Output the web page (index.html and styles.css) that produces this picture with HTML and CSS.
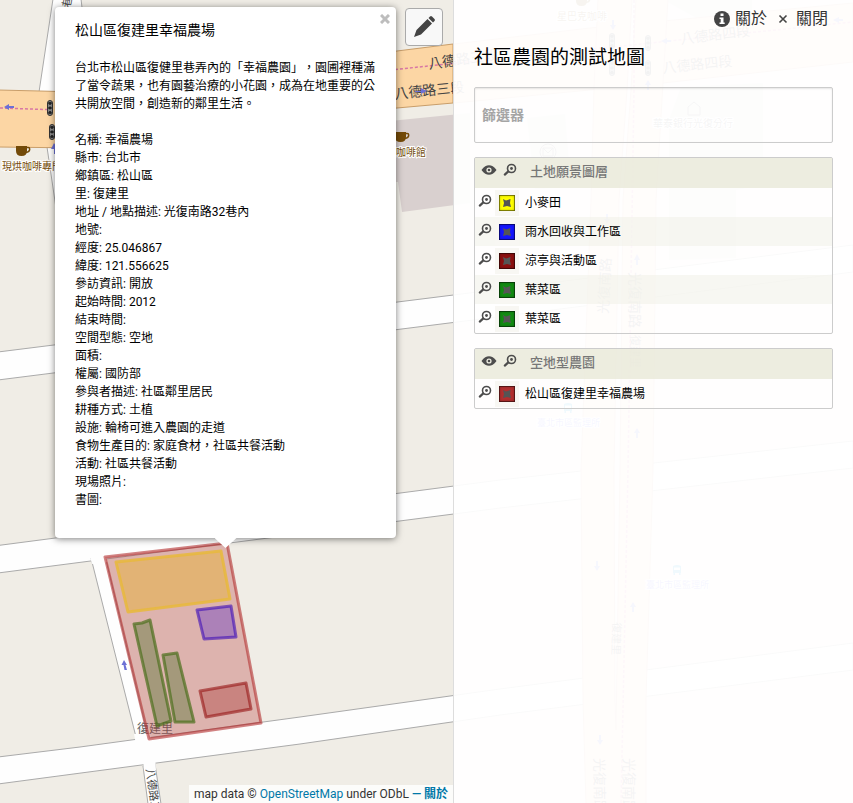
FILE: index.html
```html
<!DOCTYPE html>
<html lang="zh-Hant-TW">
<head>
<meta charset="utf-8">
<meta name="viewport" content="width=device-width, initial-scale=1">
<title>社區農園的測試地圖</title>
<link rel="stylesheet" href="styles.css">
</head>
<body>
<svg class="defs" aria-hidden="true">
  <symbol id="lens" viewBox="0 0 14 14"><circle cx="8.5" cy="5.5" r="4" fill="none" stroke="#4d4d4d" stroke-width="1.6"/><circle cx="8.5" cy="5.5" r="1.4" fill="#4d4d4d"/><path d="M5.3 8.4 1.8 11.6" stroke="#4d4d4d" stroke-width="2.2" stroke-linecap="round"/></symbol>
  <symbol id="eye" viewBox="0 0 16 12"><path d="M.5 6C3 2.4 5.500 1.200 8 1.200S13 2.400 15.500 6C13 9.600 10.500 10.800 8 10.800S3 9.600.500 6Z" fill="#4d4d4d"/><circle cx="8" cy="6" r="2.600" fill="#eeeee2"/><circle cx="8" cy="6" r="1.300" fill="#4d4d4d"/></symbol>
  <symbol id="poly" viewBox="0 0 16 16"><path d="M4 4 7 5.500 11.500 4 11 8 12 12 8 11 4 12 5 8Z" fill="#555"/></symbol>
  <symbol id="arrow" viewBox="-6 -4 12 8" overflow="visible"><path d="M-5 0 0-3V-1H5V1H0V3Z" fill="#6c70d5"/></symbol>
  <symbol id="signal" viewBox="0 0 8 16"><rect x="1.500" y=".500" width="5" height="15" rx="2.500" fill="#888" stroke="#333"/><path d="M2 3h4M2 8h4M2 13h4" stroke="#222"/><circle cx="4" cy="3.500" r="1.400" fill="#222"/><circle cx="4" cy="8" r="1.400" fill="#222"/><circle cx="4" cy="12.500" r="1.400" fill="#222"/></symbol>
  <symbol id="cup" viewBox="0 0 15 12"><path d="M0 1H11V6Q11 11 5.500 11T0 6Z" fill="#734a08"/><path d="M10 2.500h2.200a1.500 1.500 0 0 1 1.500 1.500q0 3-4 3.500" fill="none" stroke="#734a08" stroke-width="1.500"/></symbol>
  <symbol id="bus" viewBox="0 0 10 10"><path d="M1 1Q5-1 9 1V8H8.500V10H7V8H3V10H1.500V8H1Z" fill="#0092da"/><path d="M2 2.500H8V5H2Z" fill="#fff"/></symbol>
</svg>

<div class="app">
  <svg class="tiles" viewBox="0 0 853 803" preserveAspectRatio="xMinYMin slice" aria-hidden="true">
    <rect width="853" height="803" fill="#f0ede6"/>
    <g fill="#d9d0cf">
      <path d="M380 122 470 113V203L402 212 398 182H380Z"/>
      <path d="M527 118 565 114 571 187 535 189Z"/>
      <path d="M681 87 763 83V185L736 190V258L669 260V120Z"/>
      <path d="M664 0H752V10L700 20Z"/>
    </g>
    <g fill="#fefefe" stroke="#aaa" stroke-width="1">
      <path d="M53-1 39 92H92L81-1Z"/>
      <path d="M47 147 57 215H78L70 147Z"/>
      <path d="M-2 352 853 245V272L-2 380Z"/>
      <path d="M-2 545.500 500 480 853 441V468L500 508-2 573Z"/>
      <path d="M-2 757 80 747 300 717 500 689 853 643V670L500 715 300 744-2 784Z"/>
      <path d="M143 766 148 804H161L155 764Z"/>
      <path d="M91 558 137 741H149L105 556Z"/>
    </g>
    <path fill="#fefefe" d="M88 549 103 547 108 562 92 564ZM134 734H150L152 748 137 750ZM143 758 155 757 156 770 144 771Z"/>
    <g fill="#fcd6a4" stroke="#c99e6a" stroke-width="1">
      <path d="M-2 90 80 92 300 68 397 51 453 44V103L397 108 80 148-2 147Z"/>
    </g>
    <g fill="#fcd0bc" stroke="#d8aa94" stroke-width="1">
      <path d="M454 44 590 28 853 3V62L663 83 454 103Z"/>
      <path d="M598-1 594 88 591 200 581 470 583 700 586 804H646L646 700 653 470 656 200 663 83 668-1Z"/>
    </g>
    <path d="M632-1 627 90 619 200 614 470 615 700 616 730 620 470 623 200 631 90 636-1Z" fill="#f0ede6" stroke="#d8aa94"/>
    <g fill="none" stroke="#d877a4" stroke-width="1.500" stroke-dasharray="3 2">
      <path d="M0 108 60 110M390 70 853 22M634 0V90L628 470 621 803"/>
    </g>
    <g class="road-label">
      <text transform="translate(429 69) rotate(-8)">八德路三段</text>
      <text transform="translate(395 99) rotate(-6)">八德路三段</text>
      <text transform="translate(681 44) rotate(-7)">八德路四段</text>
      <text transform="translate(663 73) rotate(-6)">八德路四段</text>
      <text transform="translate(608 314) rotate(-87)">光復南路</text>
      <text transform="translate(630 272) rotate(90)">光復南路</text>
      <text transform="translate(594 758) rotate(89)">光復南路</text>
      <text transform="translate(624 758) rotate(90)">光復南路</text>
      <text transform="translate(70 8) rotate(-80)" class="small">巷</text>
      <text transform="translate(146 769) rotate(82)" class="small">八德路三段</text>
      <text transform="translate(631 335) rotate(90)" class="small">復建里</text>
      <text transform="translate(613 622) rotate(92)" class="small">復建里</text>
    </g>
    <g class="poi">
      <text x="2" y="170">現烘咖啡專門店</text>
      <text x="386" y="156">星咖啡館</text>
      <text x="557" y="20">星巴克咖啡</text>
      <text x="653" y="127" class="bank">華泰銀行光復分行</text>
      <text x="537" y="426" class="stop">臺北市區監理所</text>
      <text x="646" y="588" class="stop">臺北市區監理所</text>
    </g>
    <use href="#cup" x="16" y="145" width="15" height="12"/>
    <use href="#cup" x="395" y="131" width="15" height="12"/>
    <use href="#cup" x="576" y="-5" width="15" height="12"/>
    <use href="#bus" x="563" y="403" width="10" height="10"/>
    <use href="#bus" x="672" y="565" width="10" height="10"/>
    <g fill="none" stroke="#666"><circle cx="548" cy="152" r="8"/><path d="M543 148H553V156H543ZL548 153 553 148M688 107 694 102 700 107V115H688Z"/></g>
    <use href="#signal" x="46" y="100" width="8" height="16"/>
    <use href="#signal" x="48" y="124" width="8" height="16"/>
    <use href="#signal" x="608" y="33" width="8" height="16"/>
    <use href="#signal" x="644" y="35" width="8" height="16"/>
    <use href="#signal" x="608" y="60" width="8" height="16"/>
    <use href="#signal" x="644" y="60" width="8" height="16"/>
    <use href="#arrow" x="3" y="103" width="12" height="8"/>
    <g fill="#6c70d5">
      <path d="M124 660 127 665H125.500L127 670H124.500L123.500 665H121.500Z"/>
      <path d="M54 143 58 149H56V154H54V149H51ZM415 91H421V88L427 91 421 94V92H415Z"/>
      <path d="M833 20 839 17V19H843V21H839V23ZM661 41 667 38V40H671V42H667V44ZM612 20H614V25H616L613 30 610 25H612ZM648 80 651 85H649V90H647V85H645Z"/>
      <path d="M637 254 640 260H638V265H636V260H634ZM606 214H608V219H610L607 224 604 219H606ZM637 428 640 433H638V438H636V433H634ZM596 561H598V566H600L597 571 594 566H596ZM633 602 636 607H634V612H632V607H630ZM599 735H601V740H603L600 745 597 740H599Z"/>
    </g>
    <text x="137" y="733" class="village">復建里</text>
    <g stroke-width="3" stroke-linejoin="round" fill-opacity=".3" stroke-opacity=".6">
      <path d="M105 557 227 543 261 723 149 739Z" fill="#b22f2f" stroke="#b22f2f"/>
      <path d="M116 562 221 551 230 599 128 612Z" fill="#e8b430" stroke="#e8b93c" fill-opacity=".45" stroke-opacity=".85"/>
      <path d="M197 610 231 606 236 637 204 639Z" fill="#3d0ed0" stroke="#3c0cb8"/>
      <path d="M134 624 142 623 150 620 171 721 157 726ZM163 655 177 653 194 722 175 722Z" fill="#4f7430" stroke="#4b6f1c" fill-opacity=".4" stroke-opacity=".7"/>
      <path d="M200 691 246 683 251 709 206 717Z" fill="#9c1616" stroke="#961414"/>
    </g>
  </svg>

  <main class="map">
    <button class="edit" type="button" aria-label="編輯">
      <svg viewBox="0 0 24 24" width="24" height="24" aria-hidden="true"><path d="M2 22 4.500 15 15.500 4 20 8.500 9 19.500ZM16.500 3 18 1.500Q19 .500 20 1.500L22.500 4Q23.500 5 22.500 6L21 7.500Z" fill="#444"/></svg>
    </button>

    <article class="popup">
      <button class="dismiss" type="button" aria-label="關閉彈出視窗"><svg viewBox="0 0 10 10" width="10" height="10" aria-hidden="true"><path d="M1 1 9 9M9 1 1 9" stroke="#bdbdbd" stroke-width="3"/></svg></button>
      <h2>松山區復建里幸福農場</h2>
      <p>台北市松山區復健里巷弄內的「幸福農園」，園圃裡種滿了當令蔬果，也有園藝治療的小花園，成為在地重要的公共開放空間，創造新的鄰里生活。</p>
      <ul>
        <li>名稱: 幸福農場</li>
        <li>縣市: 台北市</li>
        <li>鄉鎮區: 松山區</li>
        <li>里: 復建里</li>
        <li>地址 / 地點描述: 光復南路32巷內</li>
        <li>地號:</li>
        <li>經度: 25.046867</li>
        <li>緯度: 121.556625</li>
        <li>參訪資訊: 開放</li>
        <li>起始時間: 2012</li>
        <li>結束時間:</li>
        <li>空間型態: 空地</li>
        <li>面積:</li>
        <li>權屬: 國防部</li>
        <li>參與者描述: 社區鄰里居民</li>
        <li>耕種方式: 土植</li>
        <li>設施: 輪椅可進入農園的走道</li>
        <li>食物生產目的: 家庭食材，社區共餐活動</li>
        <li>活動: 社區共餐活動</li>
        <li>現場照片:</li>
        <li>書圖:</li>
      </ul>
    </article>

    <footer class="credit">map data © <a href="#osm">OpenStreetMap</a> under ODbL <a href="#about"><b>— 關於</b></a></footer>
  </main>

  <aside class="panel">
    <nav class="actions">
      <a href="#about"><svg viewBox="0 0 16 16" width="16" height="16" aria-hidden="true"><circle cx="8" cy="8" r="8" fill="#444"/><path d="M6.500 2.500h3v2.500h-3ZM5.500 6.500h4V11.500h1.200V13H5.500V11.500H6.700V8H5.500Z" fill="#fff"/></svg>關於</a>
      <a href="#close"><svg viewBox="0 0 16 16" width="16" height="16" aria-hidden="true"><path d="M4.500 4.500 11.500 11.500M11.500 4.500 4.500 11.500" stroke="#444" stroke-width="1.600"/></svg>關閉</a>
    </nav>
    <h1>社區農園的測試地圖</h1>
    <input class="filter" type="text" placeholder="篩選器" aria-label="篩選器">

    <section class="layer">
      <header>
        <button type="button" aria-label="顯示圖層"><svg width="16" height="12"><use href="#eye"/></svg></button>
        <button type="button" aria-label="縮放至圖層"><svg width="14" height="14"><use href="#lens"/></svg></button>
        <h3>土地願景圖層</h3>
      </header>
      <ul>
        <li><button type="button" aria-label="縮放"><svg width="14" height="14"><use href="#lens"/></svg></button><span class="tile"><svg class="swatch yellow"><use href="#poly"/></svg></span><a href="#f1">小麥田</a></li>
        <li><button type="button" aria-label="縮放"><svg width="14" height="14"><use href="#lens"/></svg></button><span class="tile"><svg class="swatch blue"><use href="#poly"/></svg></span><a href="#f2">雨水回收與工作區</a></li>
        <li><button type="button" aria-label="縮放"><svg width="14" height="14"><use href="#lens"/></svg></button><span class="tile"><svg class="swatch maroon"><use href="#poly"/></svg></span><a href="#f3">涼亭與活動區</a></li>
        <li><button type="button" aria-label="縮放"><svg width="14" height="14"><use href="#lens"/></svg></button><span class="tile"><svg class="swatch green"><use href="#poly"/></svg></span><a href="#f4">葉菜區</a></li>
        <li><button type="button" aria-label="縮放"><svg width="14" height="14"><use href="#lens"/></svg></button><span class="tile"><svg class="swatch green"><use href="#poly"/></svg></span><a href="#f5">葉菜區</a></li>
      </ul>
    </section>

    <section class="layer">
      <header>
        <button type="button" aria-label="顯示圖層"><svg width="16" height="12"><use href="#eye"/></svg></button>
        <button type="button" aria-label="縮放至圖層"><svg width="14" height="14"><use href="#lens"/></svg></button>
        <h3>空地型農園</h3>
      </header>
      <ul>
        <li><button type="button" aria-label="縮放"><svg width="14" height="14"><use href="#lens"/></svg></button><span class="tile"><svg class="swatch red"><use href="#poly"/></svg></span><a href="#f6">松山區復建里幸福農場</a></li>
      </ul>
    </section>
  </aside>
</div>
</body>
</html>
```
FILE: styles.css
```css
* { box-sizing: border-box; }

body {
  margin: 0;
  font: 400 12px/18px Roboto, "Noto Sans CJK TC", sans-serif;
  text-spacing-trim: space-all;
  color: #000;
}

h1, h2, h3, p, ul { margin: 0; padding: 0; font-weight: inherit; }
ul { list-style: none; }
a { text-decoration: none; color: inherit; }
button { border: 0; padding: 0; background: none; font: inherit; cursor: pointer; }
svg { display: block; }
.defs { position: absolute; width: 0; height: 0; }

.app {
  position: relative;
  display: grid;
  grid-template-columns: minmax(0, 1fr) 400px;
  min-height: 100vh;
  overflow: hidden;
}

/* Base map, drawn beneath both columns */
.tiles { position: absolute; inset: 0; width: 100%; height: 100%; }
.tiles text { font-family: "Noto Sans CJK TC", sans-serif; }
.road-label { font-size: 14px; fill: #444; }
.road-label .small { font-size: 11px; }
.poi { font-size: 10px; fill: #734a08; stroke: #fff; stroke-width: 2px; paint-order: stroke; }
.poi .bank { fill: #555; }
.poi .stop { font-size: 9px; fill: #66f; }
.village { font-size: 12px; fill: #666; }

.map { position: relative; }

.edit {
  position: absolute;
  top: 8px;
  right: 10px;
  width: 38px;
  height: 38px;
  display: grid;
  place-items: center;
  background: #f8f8f8;
  border: 1px solid #aaa;
  border-radius: 4px;
}

.popup {
  position: absolute;
  top: 7px;
  left: 55px;
  width: 341px;
  padding: 14px 20px 29px;
  background: #fff;
  border-radius: 4px;
  box-shadow: 0 1px 7px rgba(0, 0, 0, .5);
}
.popup::after {
  content: "";
  position: absolute;
  top: 100%;
  left: 50%;
  width: 22px;
  height: 10px;
  margin-left: -11px;
  background: #fff;
  clip-path: polygon(0 0, 100% 0, 50% 100%);
}
.popup h2 { font-size: 14px; line-height: 18px; }
.popup p { margin: 20px 0 18px; }
.dismiss { position: absolute; top: 7px; right: 6px; }

.credit {
  position: absolute;
  right: 0;
  bottom: 0;
  padding: 0 5px;
  background: rgba(255, 255, 255, .8);
  color: #333;
  white-space: nowrap;
}
.credit a { color: #0078a8; }

.panel {
  position: relative;
  padding: 9px 20px 20px;
  background: rgba(255, 255, 255, .94);
  border-left: 1px solid #ddd;
}
.actions {
  display: flex;
  justify-content: flex-end;
  gap: 8px;
  padding-right: 5px;
  font-size: 16px;
  line-height: 20px;
  color: #333;
}
.actions a { display: flex; align-items: center; gap: 5px; }

.panel h1 { margin-top: 17px; font-size: 19px; line-height: 24px; }

.filter {
  display: block;
  width: 100%;
  height: 56px;
  margin: 17px 0 14px;
  padding: 0 7px;
  border: 1px solid #ccc;
  border-radius: 2px;
  background: transparent;
  box-shadow: inset 0 1px 2px rgba(0, 0, 0, .1);
  font: bold 14px/20px Roboto, "Noto Sans CJK TC", sans-serif;
}
.filter::placeholder { color: #a5a5a5; opacity: 1; }

.layer {
  margin-bottom: 14px;
  border: 1px solid #ccc;
  border-radius: 2px;
}
.layer header {
  display: flex;
  align-items: center;
  gap: 6px;
  height: 30px;
  padding: 0 6px 6px;
  background: rgba(232, 232, 216, .8);
}
.layer h3 {
  padding: 4px 0 0 7px;
  font-size: 13px;
  font-weight: 500;
  line-height: 20px;
  color: #777;
}
.layer li { display: flex; align-items: center; height: 29px; padding-left: 3px; }
.layer li:nth-child(even) { background: rgba(240, 240, 230, .5); }
.layer li button { padding-bottom: 4px; }

.tile { margin: 0 6px 0 3px; padding: 5px 4px; background: #f8f7f3; }
.swatch { width: 16px; height: 16px; box-shadow: inset 0 0 0 1px rgba(0, 0, 0, .4), inset 0 0 3px rgba(0, 0, 0, .5); }
.yellow { background: #ff0; }
.blue { background: #1414ff; }
.maroon { background: #8b1010; }
.green { background: #128a12; }
.red { background: #b22f2f; }
```
